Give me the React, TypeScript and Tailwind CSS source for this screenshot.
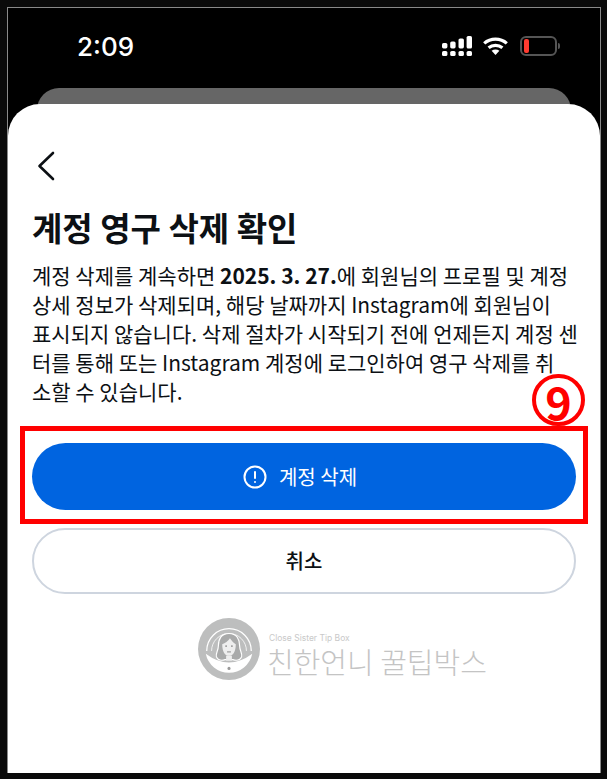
const font = "font-['Noto_Sans_CJK_KR','Noto_Sans',sans-serif]";

function StatusIcons() {
  return (
    <div className="flex items-center gap-[11px]">
      <svg width="30" height="20" viewBox="0 0 30 20" fill="#fff">
        <rect x="0" y="7" width="5.4" height="5.4" rx="1.6" />
        <rect x="8.2" y="5.5" width="5.4" height="6.9" rx="1.6" />
        <rect x="16.5" y="2.5" width="5.4" height="9.9" rx="1.6" />
        <rect x="24.6" y="0" width="5.4" height="12.5" rx="1.6" />
        <rect x="0" y="15" width="5.4" height="5" rx="1.6" />
        <rect x="8.2" y="15" width="5.4" height="5" rx="1.6" />
        <rect x="16.5" y="15" width="5.4" height="5" rx="1.6" />
        <rect x="24.6" y="15" width="5.4" height="5" rx="1.6" />
      </svg>
      <svg width="25" height="18" viewBox="0 0 25 18" fill="none" stroke="#fff" strokeWidth="3.2">
        <path d="M1.2 6.4C7.5.8 17.5.8 23.8 6.4" />
        <path d="M5.6 10.8c3.9-3.2 9.9-3.2 13.8 0" />
        <path d="M12.5 18 8.6 13.8c2.3-1.7 5.5-1.7 7.8 0z" fill="#fff" stroke="none" />
      </svg>
      <div className="ml-[1px] flex items-center gap-[1px]">
        <div className="flex h-[20px] w-[37px] items-center rounded-[6px] border-2 border-[#555] px-[2px]">
          <div className="h-[14px] w-[5px] rounded-[2px] bg-[#ff3b30]" />
        </div>
        <div className="h-[6px] w-[2px] rounded-r-full bg-[#555]" />
      </div>
    </div>
  );
}

function Logo() {
  return (
    <div className="mt-[24px] flex items-center gap-[7px] pl-[166px]">
      <svg width="62" height="62" viewBox="0 0 64 64" fill="none" className="shrink-0">
        <circle cx="32" cy="32" r="32" fill="#bdbebe" />
        <path d="M9 34a23 23 0 0 1 46 0" stroke="#fff" strokeWidth="1.3" />
        <path d="M14 34a18 18 0 0 1 36 0" stroke="#fff" strokeWidth="0.8" />
        <path d="M32 16c-8 0-11 6-11 13 0 5-3 7-2 11 2 4 6 4 9 3h8c3 1 7 1 9-3 1-4-2-6-2-11 0-7-3-13-11-13z" fill="#a9aaaa" stroke="#fff" strokeWidth="1.2" />
        <path d="M25 27c3-1 6-3 8-6 2 3 4 5 6 6 0 8-3 12-7 12s-7-4-7-12z" fill="#eee" />
        <path d="M29 39h6v5h-6z" fill="#eee" />
        <circle cx="29" cy="29" r="0.9" fill="#888" />
        <circle cx="35" cy="29" r="0.9" fill="#888" />
        <path d="M30 35h4" stroke="#888" strokeWidth="1" />
        <path d="M8 37Q32 55 56 37A24.5 24.5 0 0 1 8 37z" fill="#fff" />
        <circle cx="32" cy="52" r="1.6" fill="#9a9a9a" />
      </svg>
      <div className="flex shrink-0 flex-col pt-[12px]">
        <span className="ml-[2px] font-['Inter',sans-serif] text-[8.5px] leading-[11px] whitespace-nowrap text-[#c9c9c9]">Close Sister Tip Box</span>
        <span className="text-[29px] leading-[34px] font-light whitespace-nowrap text-[#c4c4c4]">친한언니 꿀팁박스</span>
      </div>
    </div>
  );
}

export default function App() {
  return (
    <div className={`h-[779px] w-[607px] overflow-hidden bg-[#0a0a0a] pt-[7px] pr-[6px] pb-[3px] pl-[7px] ${font}`}>
      <div className="flex h-[766px] flex-col border-x border-t border-[#8a8a8a] bg-black">
        <div className="flex h-[80px] shrink-0 items-center justify-between pr-[40px] pb-[4px] pl-[69px]">
          <span className="font-['Inter',sans-serif] text-[26px] font-medium text-white">2:09</span>
          <StatusIcons />
        </div>
        <div className="mx-[29px] h-[40px] shrink-0 rounded-t-[22px] bg-[#666]" />
        <div className="z-10 -mt-[24px] flex-1 rounded-t-[32px] bg-white px-[24px] pt-[47px]">
          <svg width="20" height="30" viewBox="0 0 20 30" fill="none" stroke="#0c1014" strokeWidth="2.6" strokeLinecap="round" strokeLinejoin="round" className="ml-[4px]">
            <path d="M17 2 3.5 15 17 28" />
          </svg>
          <h1 className="mt-[24px] text-[33px] leading-[44px] font-bold text-[#0c1014]">계정 영구 삭제 확인</h1>
          <p className="mt-[12px] text-[21px] leading-[29px] whitespace-nowrap text-[#0c1014]">
            계정 삭제를 계속하면 <strong>2025. 3. 27.</strong>에 회원님의 프로필 및 계정
            <br />상세 정보가 삭제되며, 해당 날짜까지 Instagram에 회원님이
            <br />표시되지 않습니다. 삭제 절차가 시작되기 전에 언제든지 계정 센
            <br />터를 통해 또는 Instagram 계정에 로그인하여 영구 삭제를 취
            <br />소할 수 있습니다.
          </p>
          <div className="relative mt-[20px]">
            <span className="absolute -top-[52px] -right-[9px] flex h-[52px] w-[53px] items-center justify-center rounded-full border-[4px] border-[#f00] bg-white text-[45px] leading-none font-bold text-[#f00]">9</span>
            <div className="-mx-[12px] border-[5px] border-[#f00] px-[7px] pt-[12px] pb-[9px]">
              <button className="flex h-[67px] w-full items-center justify-center gap-[12px] rounded-full bg-[#0064e0] pr-[8px] text-[20px] text-white">
                <svg width="24" height="24" viewBox="0 0 24 24" fill="none" stroke="#fff" strokeWidth="2" strokeLinecap="round">
                  <circle cx="12" cy="12" r="10.5" />
                  <path d="M12 7v6" />
                  <path d="M12 17v.01" />
                </svg>
                계정 삭제
              </button>
            </div>
          </div>
          <button className="mt-[4px] h-[66px] w-full rounded-full border-2 border-[#ced5df] text-[20px] font-medium text-[#0c1014]">취소</button>
          <Logo />
        </div>
      </div>
    </div>
  );
}
